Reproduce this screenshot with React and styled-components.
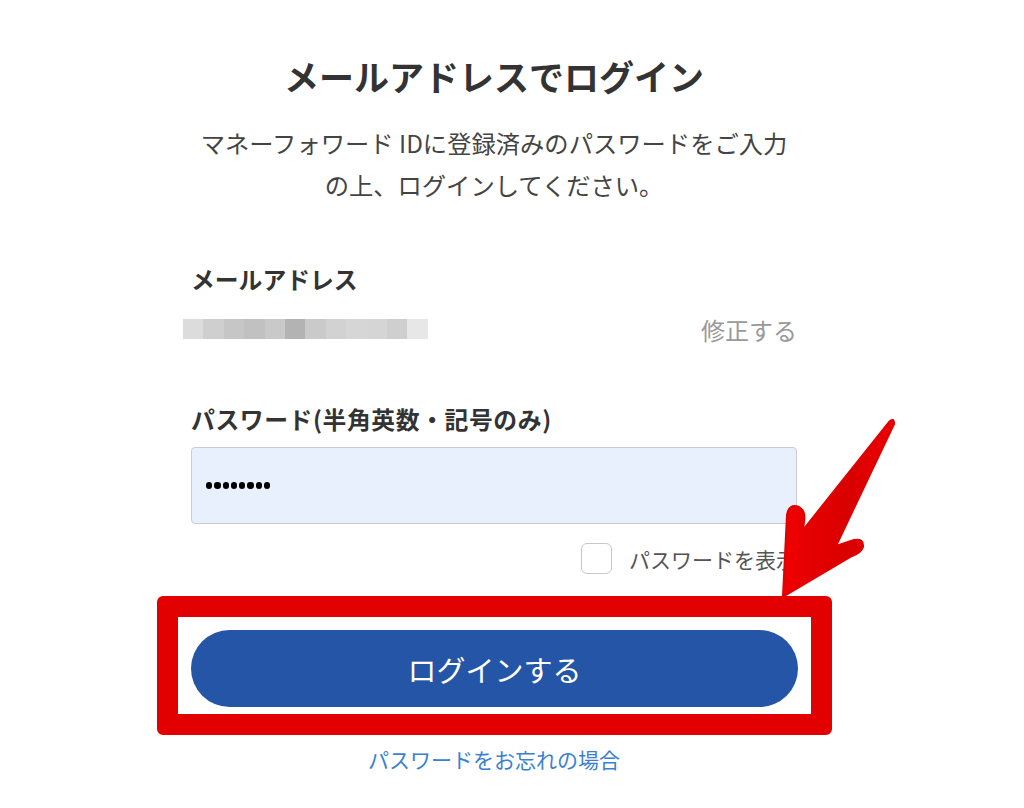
import React from 'react';
import styled, { createGlobalStyle } from 'styled-components';

const GlobalStyle = createGlobalStyle`
  body {
    margin: 0;
    background: #fff;
    font-family: "Noto Sans CJK JP", "Noto Sans", sans-serif;
    color: #333;
  }
`;

const Page = styled.div`
  position: relative;
  width: 1024px;
  height: 808px;
  overflow: hidden;
`;

const Column = styled.div`
  width: 606px;
  margin-left: 191px;
  padding-top: 52px;
  display: flex;
  flex-direction: column;
`;

const Title = styled.h1`
  margin: 0;
  font-size: 35px;
  line-height: 48px;
  font-weight: 700;
  text-align: center;
  color: #333;
`;

const Lead = styled.p`
  margin: 22px -10px 0;
  font-size: 24.3px;
  line-height: 42px;
  text-align: center;
  color: #444;
`;

const Label = styled.div`
  margin-top: ${p => p.$top}px;
  font-size: 23.8px;
  line-height: 32px;
  font-weight: 700;
  color: #333;
  letter-spacing: ${p => p.$track || 0}px;
`;

const EmailRow = styled.div`
  margin-top: 14px;
  display: flex;
  align-items: center;
  justify-content: space-between;
  height: 40px;
`;

const Mosaic = styled.div`
  display: grid;
  grid-template-columns: repeat(12, 20.4px);
  grid-template-rows: 20px;
  margin-left: -8px;
`;

const Cell = styled.div`
  background: ${p => p.$c};
`;

const EditLink = styled.span`
  font-size: 24px;
  color: #999;
`;

const Input = styled.div`
  margin-top: 12px;
  height: 77px;
  box-sizing: border-box;
  border: 1px solid #ccc;
  border-radius: 4px;
  background: #e8f0fe;
  display: flex;
  align-items: center;
  gap: 2px;
  padding-left: 14px;
`;

const Dot = styled.span`
  width: 6.3px;
  height: 6.3px;
  border-radius: 50%;
  background: #000;
`;

const ToggleRow = styled.label`
  margin-top: 19px;
  display: flex;
  align-items: center;
  justify-content: flex-end;
  gap: 17px;
  font-size: 21px;
  color: #555;
`;

const Box = styled.span`
  width: 31px;
  height: 31px;
  box-sizing: border-box;
  border: 1.5px solid #c8c8c8;
  border-radius: 6px;
  background: #fff;
`;

const Highlight = styled.div`
  margin: 22px -35px 0 -34px;
  border: 21px solid #e30000;
  border-radius: 6px;
  padding: 13px 13px 7px;
  background: #fff;
`;

const LoginButton = styled.button`
  width: 100%;
  height: 77px;
  border: none;
  border-radius: 39px;
  background: #2455a6;
  color: #fff;
  font-family: inherit;
  font-size: 29px;
  cursor: pointer;
`;

const Forgot = styled.a`
  margin-top: 9px;
  text-align: center;
  font-size: 21px;
  color: #3b7fd1;
  text-decoration: none;
`;

const Arrow = styled.svg`
  position: absolute;
  left: 0;
  top: 0;
  pointer-events: none;
`;

const mosaic = ['#dcdcdc', '#cfcfcf', '#c6c6c6', '#c1c1c1', '#c9c9c9', '#b3b3b3', '#cacaca', '#d2d2d2', '#d6d6d6', '#d5d5d5', '#cfcfcf', '#e7e7e7'];

export default function App() {
  return (
    <Page>
      <GlobalStyle />
      <Column>
        <Title>メールアドレスでログイン</Title>
        <Lead>
          マネーフォワード IDに登録済みのパスワードをご入力
          <br />
          の上、ログインしてください。
        </Lead>
        <Label $top={57}>メールアドレス</Label>
        <EmailRow>
          <Mosaic>
            {mosaic.map((c, i) => <Cell key={i} $c={c} />)}
          </Mosaic>
          <EditLink>修正する</EditLink>
        </EmailRow>
        <Label $top={54} $track={0.6}>パスワード(半角英数・記号のみ)</Label>
        <Input>
          {Array.from({ length: 8 }).map((_, i) => <Dot key={i} />)}
        </Input>
        <ToggleRow>
          <Box />
          パスワードを表示
        </ToggleRow>
        <Highlight>
          <LoginButton>ログインする</LoginButton>
        </Highlight>
        <Forgot href="#">パスワードをお忘れの場合</Forgot>
      </Column>
      <Arrow width="1024" height="808" viewBox="0 0 1024 808">
        <defs>
          <linearGradient id="ag" x1="0" y1="0" x2="1" y2="0">
            <stop offset="0" stopColor="#f00000" />
            <stop offset="0.6" stopColor="#d80000" />
            <stop offset="1" stopColor="#ee0000" />
          </linearGradient>
        </defs>
        <path
          d="M783 596 L787 515 Q789 503 799 507 Q806 511 804 522 L803 530 L889 422 Q894 417 894 424 L836 546 L854 540 Q864 538 863 547 Q861 553 852 556 L786 595 Z"
          fill="url(#ag)"
          stroke="#e00000"
          strokeWidth="2"
          strokeLinejoin="round"
        />
      </Arrow>
    </Page>
  );
}
